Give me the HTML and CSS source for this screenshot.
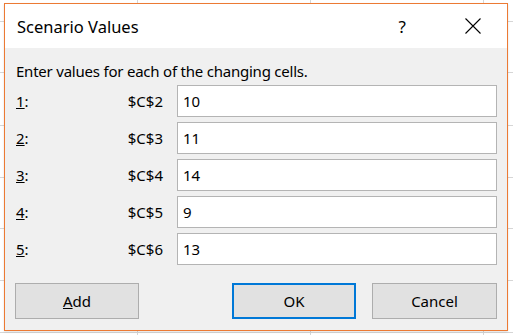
FILE: index.html
```html
<!DOCTYPE html>
<html>
<head>
<meta charset="utf-8">
<link rel="stylesheet" href="styles.css">
</head>
<body>
<div class="dialog">
  <div class="titlebar">
    <span class="title">Scenario Values</span>
    <span class="help">?</span>
    <svg class="close" width="16" height="16" viewBox="0 0 16 16"><path d="M0.5 0.5 L15.5 15.5 M15.5 0.5 L0.5 15.5" stroke="#000" stroke-width="1.1" fill="none"/></svg>
  </div>
  <div class="body">
    <div class="intro">Enter values for each of the changing cells.</div>
    <div class="rows">
      <div class="row"><span class="num"><u>1</u>:</span><span class="ref">$C$2</span><div class="field">10</div></div>
      <div class="row"><span class="num"><u>2</u>:</span><span class="ref">$C$3</span><div class="field">11</div></div>
      <div class="row"><span class="num"><u>3</u>:</span><span class="ref">$C$4</span><div class="field">14</div></div>
      <div class="row"><span class="num"><u>4</u>:</span><span class="ref">$C$5</span><div class="field">9</div></div>
      <div class="row"><span class="num"><u>5</u>:</span><span class="ref">$C$6</span><div class="field">13</div></div>
    </div>
    <div class="buttons">
      <div class="btn add"><u>A</u>dd</div>
      <div class="btn ok">OK</div>
      <div class="btn cancel">Cancel</div>
    </div>
  </div>
</div>
</body>
</html>
```
FILE: styles.css
```css
html, body { margin: 0; padding: 0; }
body {
  width: 513px;
  height: 335px;
  overflow: hidden;
  padding: 3px 0 0 4px;
  box-sizing: border-box;
  font-family: "Noto Sans", "Open Sans", sans-serif;
  color: #000;
  background:
    linear-gradient(#d6d6d6, #d6d6d6) 0 21px / 100% 1px no-repeat,
    linear-gradient(#d6d6d6, #d6d6d6) 0 72px / 100% 1px no-repeat,
    linear-gradient(#d6d6d6, #d6d6d6) 0 125px / 100% 1px no-repeat,
    linear-gradient(#d6d6d6, #d6d6d6) 0 177px / 100% 1px no-repeat,
    linear-gradient(#d6d6d6, #d6d6d6) 0 228px / 100% 1px no-repeat,
    linear-gradient(#d6d6d6, #d6d6d6) 0 280px / 100% 1px no-repeat,
    linear-gradient(#d6d6d6, #d6d6d6) 0 332px / 100% 1px no-repeat,
    linear-gradient(#d6d6d6, #d6d6d6) 137px 0 / 1px 100% no-repeat,
    linear-gradient(#d6d6d6, #d6d6d6) 310px 0 / 1px 100% no-repeat,
    linear-gradient(#d6d6d6, #d6d6d6) 483px 0 / 1px 100% no-repeat,
    #ffffff;
}
.dialog {
  width: 504px;
  height: 328px;
  box-sizing: border-box;
  border: 1px solid #ec7a34;
  background: #f0f0f0;
  display: flex;
  flex-direction: column;
  box-shadow: 0 1px 2px rgba(0,0,0,0.12);
}
.titlebar {
  height: 44px;
  flex: none;
  background: #fff;
  display: flex;
  align-items: center;
  padding-left: 12px;
}
.title {
  font-size: 16.5px;
  flex: 1;
}
.help {
  font-size: 17px;
  margin-right: 59px;
}
.close {
  margin-right: 26px;
}
.body {
  flex: 1;
  padding: 13px 10px 0 11px;
  display: flex;
  flex-direction: column;
  font-size: 15px;
}
.intro {
  line-height: 20px;
  height: 24px;
  letter-spacing: -0.22px;
}
.rows {
  display: flex;
  flex-direction: column;
  gap: 5px;
}
.row {
  display: flex;
  align-items: center;
  height: 32px;
}
.num {
  width: 80px;
}
.ref {
  width: 67px;
  text-align: right;
  margin-right: 14px;
}
.field {
  width: 320px;
  height: 32px;
  box-sizing: border-box;
  border: 1px solid #b4b4b4;
  background: #fff;
  display: flex;
  align-items: center;
  padding-left: 5px;
}
.buttons {
  display: flex;
  margin-top: 18px;
}
.btn {
  width: 124px;
  height: 36px;
  box-sizing: border-box;
  border: 1px solid #adadad;
  background: #e1e1e1;
  display: flex;
  align-items: center;
  justify-content: center;
}
.add { margin-left: -1px; }
.ok {
  margin-left: 93px;
  border: 2px solid #0078d7;
}
.cancel {
  margin-left: 16px;
  width: 125px;
}
```
